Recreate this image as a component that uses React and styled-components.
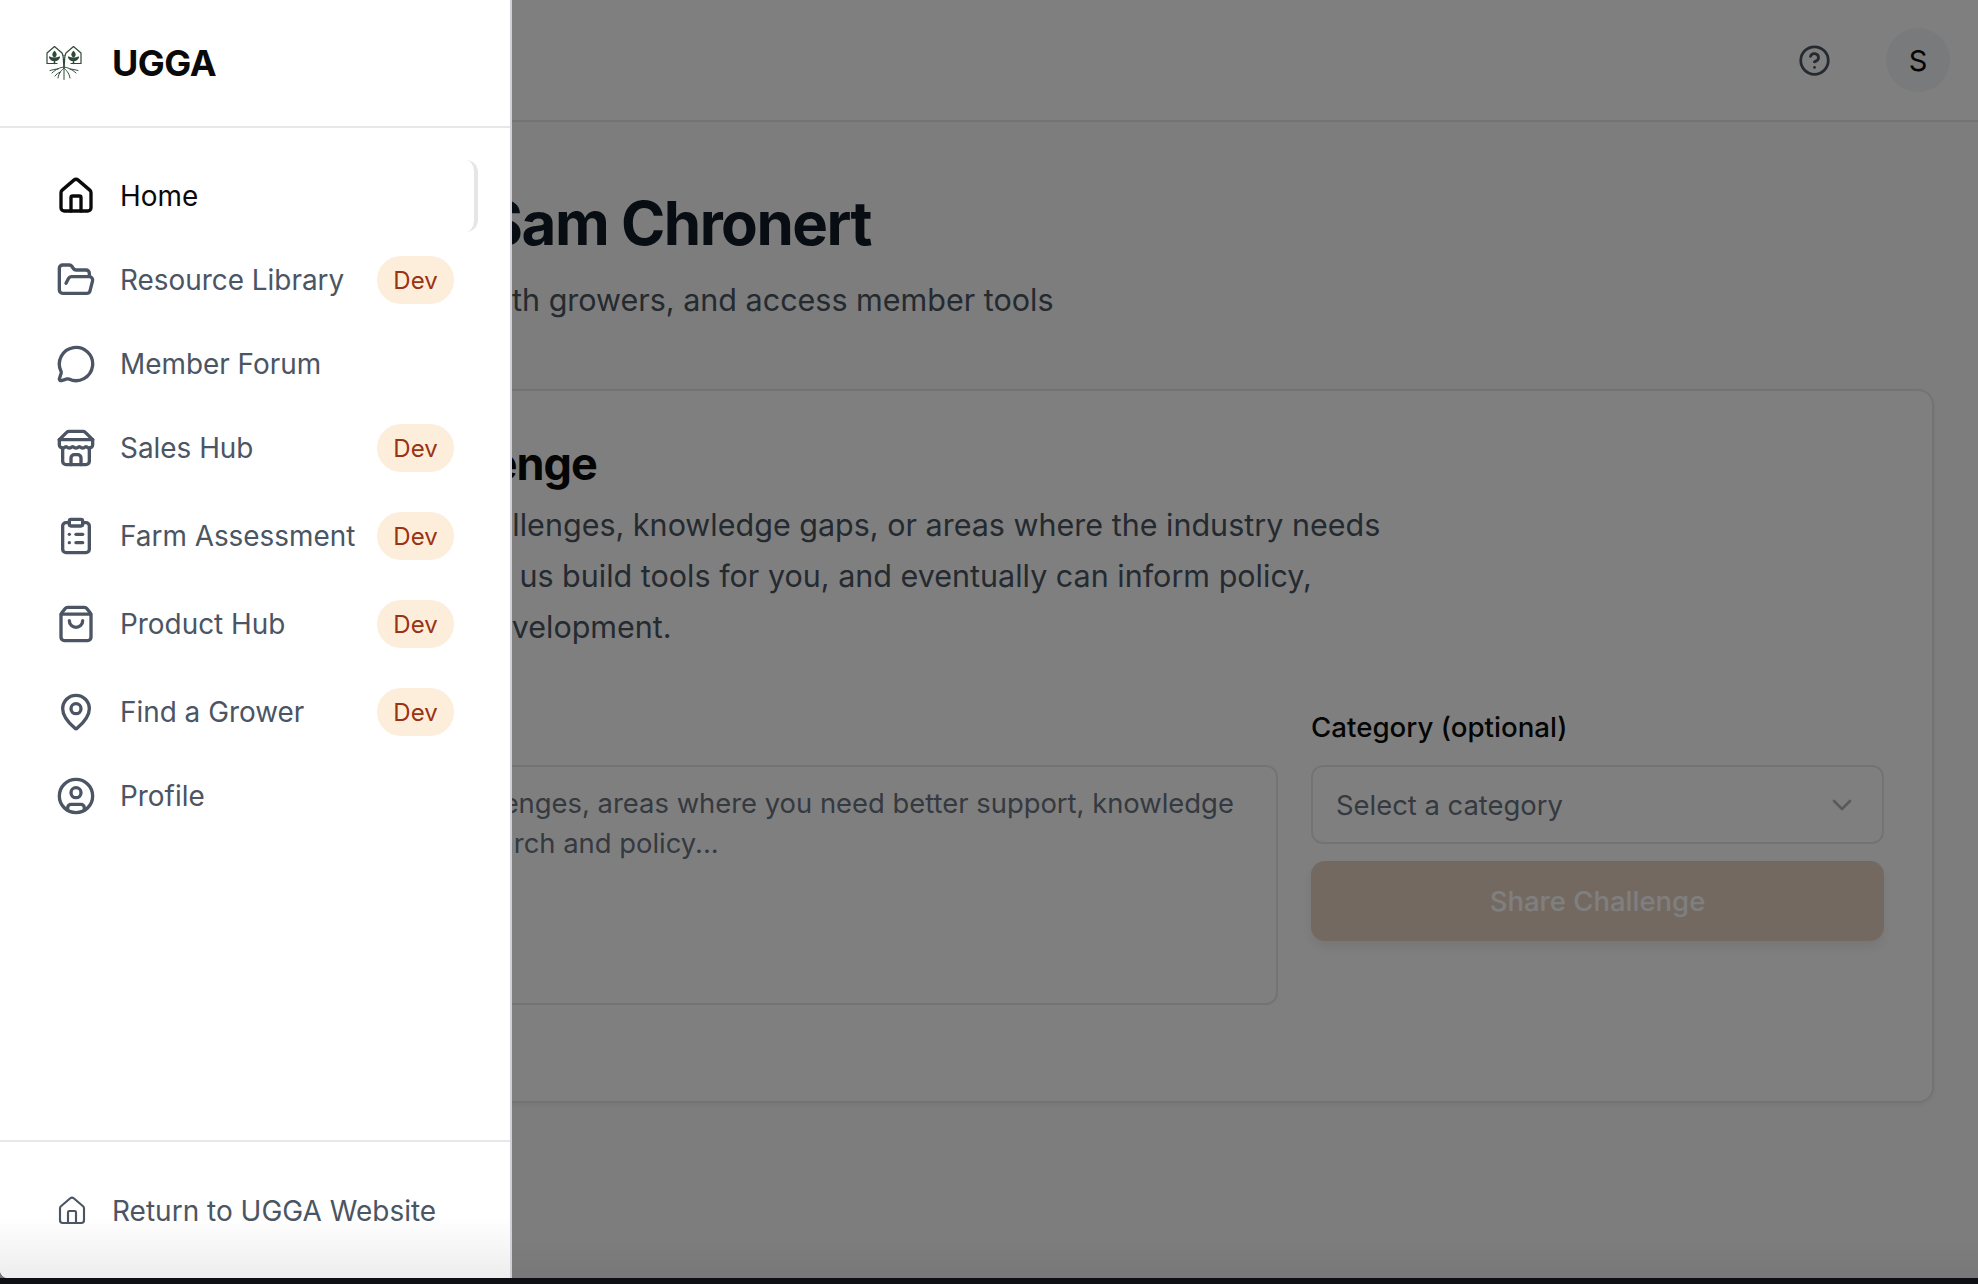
import React from "react";
import styled, { createGlobalStyle } from "styled-components";
import {
  House,
  FolderOpen,
  MessageCircle,
  ClipboardList,
  ShoppingBag,
  MapPin,
  CircleUser,
  CircleHelp,
  ChevronDown,
} from "lucide-react";

const Global = createGlobalStyle`
  html, body { margin: 0; padding: 0; background: #0d0f14; }
  * { box-sizing: border-box; }
  body { font-family: Inter, "Noto Sans", sans-serif; overflow: hidden; }
`;

const Screen = styled.div`
  position: relative;
  width: 1978px;
  height: 1278px;
  overflow: hidden;
  background: linear-gradient(180deg, #f8faf8 0%, #f8faf8 97%, #f0f1f0 100%);
`;

const TopBar = styled.header`
  height: 122px;
  background: #fff;
  border-bottom: 2px solid #e5e7eb;
  display: flex;
  align-items: center;
  justify-content: flex-end;
  gap: 55px;
  padding-right: 28px;
`;

const HelpIcon = styled(CircleHelp)`
  color: #4b5563;
  display: block;
`;

const Avatar = styled.div`
  width: 64px;
  height: 64px;
  border-radius: 50%;
  background: #f3f4f6;
  color: #0a0a0a;
  font-size: 29px;
  display: flex;
  align-items: center;
  justify-content: center;
`;

const Main = styled.main`
  padding: 65px 44px 0 49px;
`;

const Title = styled.h1`
  margin: 0 0 0 -8px;
  font-size: 60px;
  line-height: 72px;
  font-weight: 700;
  color: #111827;
  letter-spacing: -1.5px;
  white-space: nowrap;
`;

const Subtitle = styled.p`
  margin: 21px 0 0 40px;
  font-size: 30.5px;
  line-height: 40px;
  color: #4b5563;
  white-space: nowrap;
`;

const Card = styled.section`
  margin-top: 68.5px;
  height: 714px;
  background: #fff;
  border: 2px solid #e5e7eb;
  border-radius: 16px;
  padding: 47.5px 48px 0 48px;
  box-shadow: 0 2px 4px rgba(0, 0, 0, 0.05);
`;

const CardTitle = styled.h2`
  margin: 0 0 0 45px;
  font-size: 45px;
  line-height: 52px;
  font-weight: 700;
  color: #0a0a0a;
  letter-spacing: -1px;
  white-space: nowrap;
`;

const CardText = styled.p`
  margin: 9px 0 0;
  font-size: 30.5px;
  line-height: 51px;
  color: #4b5563;
  white-space: nowrap;
`;

const Line = styled.span`
  display: block;
  margin-left: ${(p) => p.$x}px;
`;

const FormGrid = styled.div`
  margin-top: 57.5px;
  display: grid;
  grid-template-columns: 1179px 573px;
  gap: 33px;
`;

const Field = styled.div`
  display: flex;
  flex-direction: column;
`;

const Label = styled.label`
  font-size: 27.7px;
  line-height: 34px;
  font-weight: 500;
  color: #0a0a0a;
  margin-bottom: 21.5px;
`;

const TextBox = styled.div`
  height: 240px;
  border: 2px solid #e5e7eb;
  border-radius: 12px;
  padding: 15.5px 26px;
  font-size: 27.4px;
  line-height: 40px;
  color: #6b7280;
  white-space: nowrap;
`;

const SelectBox = styled.div`
  height: 79px;
  border: 2px solid #e5e7eb;
  border-radius: 12px;
  padding: 0 24px 0 23px;
  display: flex;
  align-items: center;
  justify-content: space-between;
  font-size: 27.4px;
  color: #6b7280;
`;

const Chevron = styled(ChevronDown)`
  color: #b5b5b5;
  display: block;
`;

const ShareButton = styled.button`
  margin-top: 17px;
  height: 80px;
  width: 100%;
  border: 0;
  border-radius: 14px;
  background: #e8d2c2;
  color: #fff;
  font-family: inherit;
  font-size: 27.5px;
  font-weight: 500;
  box-shadow: 0 6px 12px rgba(0, 0, 0, 0.08);
`;

const Scrim = styled.div`
  position: absolute;
  inset: 0;
  background: rgba(0, 0, 0, 0.5);
`;

const Drawer = styled.aside`
  position: absolute;
  left: 0;
  top: 0;
  bottom: 0;
  width: 512px;
  background: #fff;
  border-right: 2px solid #cfcfd6;
  border-bottom-left-radius: 8px;
  display: flex;
  flex-direction: column;
`;

const Brand = styled.div`
  height: 128px;
  border-bottom: 2px solid #e5e7eb;
  display: flex;
  align-items: center;
  padding-left: 45px;
  gap: 29px;
  flex: none;
`;

const BrandName = styled.div`
  font-size: 36px;
  font-weight: 700;
  color: #0a0a0a;
  letter-spacing: -0.5px;
`;

const Nav = styled.nav`
  flex: 1;
  padding: 32px 32px 0;
  display: flex;
  flex-direction: column;
`;

const Row = styled.a`
  height: 72px;
  margin-top: ${(p) => p.$gap}px;
  display: flex;
  align-items: center;
  padding: 0 24px;
  border-radius: 12px;
  font-size: 27.9px;
  white-space: nowrap;
  color: ${(p) => (p.$active ? "#0a0a0a" : "#4b5563")};
  background: #fff;
  border-right: ${(p) => (p.$active ? "4px solid #e6e6e6" : "0")};
  &:first-child { margin-top: 0; }
  svg { flex: none; display: block; margin-right: 24px; }
`;

const Badge = styled.span`
  margin-left: auto;
  height: 48px;
  width: 77px;
  border-radius: 24px;
  background: #fdeedc;
  color: #9a3412;
  font-size: 24px;
  display: flex;
  align-items: center;
  justify-content: center;
  flex: none;
`;

const Foot = styled.div`
  height: 138px;
  flex: none;
  border-top: 2px solid #e5e7eb;
  background: linear-gradient(180deg, #fff 0%, #fff 55%, #ededed 100%);
  border-bottom-left-radius: 8px;
  display: flex;
  align-items: center;
  gap: 24.5px;
  padding: 1px 0 0 55.5px;
  font-size: 28px;
  color: #4b5563;
  svg { flex: none; display: block; }
`;

const StoreIcon = ({ size, strokeWidth }) => (
  <svg width={size} height={size} viewBox="0 0 24 24" fill="none" stroke="currentColor" strokeWidth={strokeWidth} strokeLinecap="round" strokeLinejoin="round">
    <path d="m2 7 4.41-4.41A2 2 0 0 1 7.83 2h8.34a2 2 0 0 1 1.42.59L22 7" />
    <path d="M4 12v8a2 2 0 0 0 2 2h12a2 2 0 0 0 2-2v-8" />
    <path d="M15 22v-4a2 2 0 0 0-2-2h-2a2 2 0 0 0-2 2v4" />
    <path d="M2 7h20" />
    <path d="M22 7v3a2 2 0 0 1-2 2a2.7 2.7 0 0 1-1.59-.63.7.7 0 0 0-.82 0A2.7 2.7 0 0 1 16 12a2.7 2.7 0 0 1-1.59-.63.7.7 0 0 0-.82 0A2.7 2.7 0 0 1 12 12a2.7 2.7 0 0 1-1.59-.63.7.7 0 0 0-.82 0A2.7 2.7 0 0 1 8 12a2.7 2.7 0 0 1-1.59-.63.7.7 0 0 0-.82 0A2.7 2.7 0 0 1 4 12a2 2 0 0 1-2-2V7" />
  </svg>
);

const items = [
  { label: "Home", Icon: House, active: true, gap: 0 },
  { label: "Resource Library", Icon: FolderOpen, dev: true, gap: 12 },
  { label: "Member Forum", Icon: MessageCircle, gap: 12 },
  { label: "Sales Hub", Icon: StoreIcon, dev: true, gap: 12 },
  { label: "Farm Assessment", Icon: ClipboardList, dev: true, gap: 16 },
  { label: "Product Hub", Icon: ShoppingBag, dev: true, gap: 16 },
  { label: "Find a Grower", Icon: MapPin, dev: true, gap: 16 },
  { label: "Profile", Icon: CircleUser, gap: 12 },
];

const Logo = () => (
  <svg width="38" height="36" viewBox="0 0 38 36" fill="none" stroke="#2f4a38" strokeWidth="1.2" strokeLinejoin="round" strokeLinecap="round">
    <path d="M2 8 L9.5 1.5 L17 8 L18 10.5 M2 8 V18.5 H12" />
    <path d="M36 8 L28.5 1.5 L21 8 L20 10.5 M36 8 V18.5 H26" />
    <path d="M9.5 6.5 C7.2 9 7.5 11 9.5 12 C11.5 11 11.8 9 9.5 6.5Z M28.5 6.5 C26.2 9 26.5 11 28.5 12 C30.5 11 30.8 9 28.5 6.5Z" fill="#2f4a38" />
    <path d="M4.5 12 C5.5 15 7.5 15.5 9.5 15.5 C11.5 15.5 13.5 15 14.5 12 C12.5 13 11 13 9.5 13 C8 13 6.5 13 4.5 12Z M23.5 12 C24.5 15 26.5 15.5 28.5 15.5 C30.5 15.5 32.5 15 33.5 12 C31.5 13 30 13 28.5 13 C27 13 25.5 13 23.5 12Z" fill="#2f4a38" />
    <path d="M9.5 15 V18.5 M28.5 15 V18.5" strokeWidth="1.6" />
    <path d="M18 10.5 C18.6 14 18.4 19 19 23 C19.6 19 19.4 14 20 10.5" strokeWidth="1.2" />
    <path d="M19 22 C15 22.5 11 24 7 28 M13 24 C10 24 7.5 25 5 25.5 M19 23 C17 25 14 27 13 33 M19 23 V34.5 M19 22 C22.5 22.5 26.5 24 31 28 M25 24 C27.5 24 30.5 25 33 25.5 M19 23 C20.5 25 24 27 25 33 M15.5 27 C13 28 11.5 29 10 31" strokeWidth="1" />
  </svg>
);

export default function App() {
  return (
    <>
      <Global />
      <Screen>
        <TopBar>
          <HelpIcon size={33} strokeWidth={2} />
          <Avatar>S</Avatar>
        </TopBar>
        <Main>
          <Title>Welcome back, Sam Chronert</Title>
          <Subtitle>Share challenges, connect with growers, and access member tools</Subtitle>
          <Card>
            <CardTitle>Share Your Challenge</CardTitle>
            <CardText>
              <Line $x={96}>Tell us about your challenges, knowledge gaps, or areas where the industry needs</Line>
              <Line $x={-33}>more support. Your input helps us build tools for you, and eventually can inform policy,</Line>
              <Line $x={40}>research, and program development.</Line>
            </CardText>
            <FormGrid>
              <Field>
                <Label>Your Challenge</Label>
                <TextBox>
                  <Line $x={126}>Describe your challenges, areas where you need better support, knowledge</Line>
                  <Line $x={36}>gaps, or priorities for research and policy...</Line>
                </TextBox>
              </Field>
              <Field>
                <Label>Category (optional)</Label>
                <SelectBox>
                  Select a category
                  <Chevron size={32} strokeWidth={2} />
                </SelectBox>
                <ShareButton>Share Challenge</ShareButton>
              </Field>
            </FormGrid>
          </Card>
        </Main>
        <Scrim />
        <Drawer>
          <Brand>
            <Logo />
            <BrandName>UGGA</BrandName>
          </Brand>
          <Nav>
            {items.map(({ label, Icon, dev, active, gap }) => (
              <Row key={label} $active={active} $gap={gap}>
                <Icon size={40} strokeWidth={2} />
                {label}
                {dev && <Badge>Dev</Badge>}
              </Row>
            ))}
          </Nav>
          <Foot>
            <House size={32} strokeWidth={1.6} />
            Return to UGGA Website
          </Foot>
        </Drawer>
      </Screen>
    </>
  );
}
